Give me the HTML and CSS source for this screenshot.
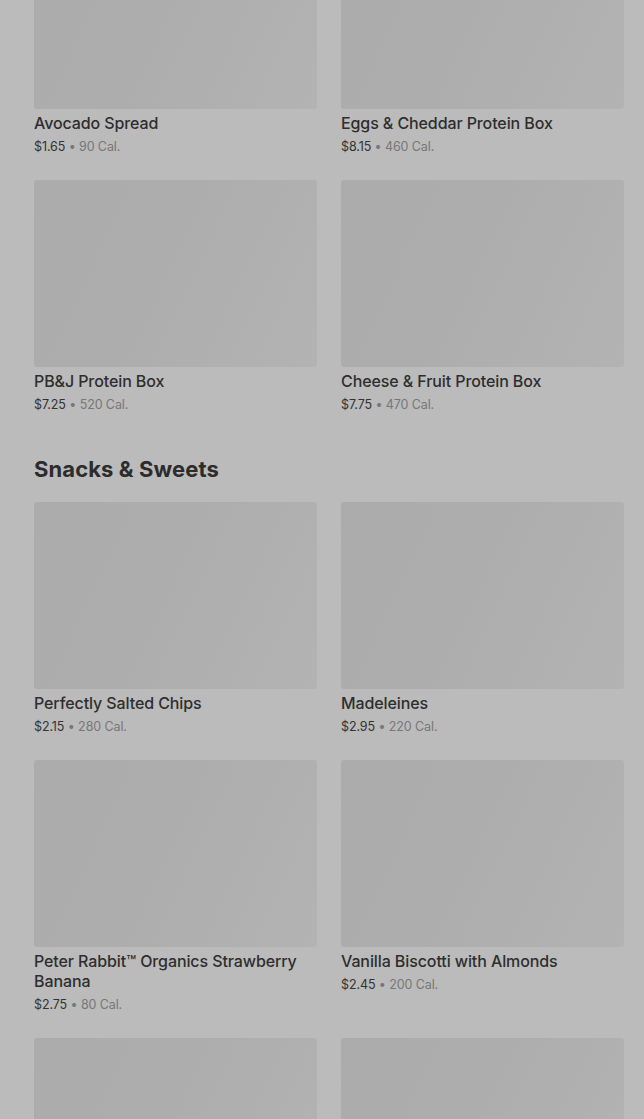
FILE: index.html
```html
<!DOCTYPE html>
<html lang="en">
<head>
  <meta charset="UTF-8" />
  <title>Menu</title>
  <link rel="stylesheet" href="styles.css">
</head>
<body>
  <main class="menu">
    <section class="section first">
      <div class="grid">
        <div class="item">
          <div class="thumb"></div>
          <div class="name">Avocado Spread</div>
          <div class="meta">$1.65 <span class="cal">&bull; 90 Cal.</span></div>
        </div>
        <div class="item">
          <div class="thumb"></div>
          <div class="name">Eggs &amp; Cheddar Protein Box</div>
          <div class="meta">$8.15 <span class="cal">&bull; 460 Cal.</span></div>
        </div>
        <div class="item">
          <div class="thumb"></div>
          <div class="name">PB&amp;J Protein Box</div>
          <div class="meta">$7.25 <span class="cal">&bull; 520 Cal.</span></div>
        </div>
        <div class="item">
          <div class="thumb"></div>
          <div class="name">Cheese &amp; Fruit Protein Box</div>
          <div class="meta">$7.75 <span class="cal">&bull; 470 Cal.</span></div>
        </div>
      </div>
    </section>

    <section class="section">
      <h2>Snacks &amp; Sweets</h2>
      <div class="grid">
        <div class="item">
          <div class="thumb"></div>
          <div class="name">Perfectly Salted Chips</div>
          <div class="meta">$2.15 <span class="cal">&bull; 280 Cal.</span></div>
        </div>
        <div class="item">
          <div class="thumb"></div>
          <div class="name">Madeleines</div>
          <div class="meta">$2.95 <span class="cal">&bull; 220 Cal.</span></div>
        </div>
        <div class="item">
          <div class="thumb"></div>
          <div class="name">Peter Rabbit™ Organics Strawberry Banana</div>
          <div class="meta">$2.75 <span class="cal">&bull; 80 Cal.</span></div>
        </div>
        <div class="item">
          <div class="thumb"></div>
          <div class="name">Vanilla Biscotti with Almonds</div>
          <div class="meta">$2.45 <span class="cal">&bull; 200 Cal.</span></div>
        </div>
        <div class="item">
          <div class="thumb"></div>
        </div>
        <div class="item">
          <div class="thumb"></div>
        </div>
      </div>
    </section>
  </main>
</body>
</html>
```

FILE: styles.css
```css
body {
  margin: 0;
  padding: 0;
  background: #bbbbbb;
  font-family: Inter, "Noto Sans", Arial, sans-serif;
  color: #2f2f2f;
  overflow: hidden;
}
.menu {
  padding: 0 20px 0 34px;
  margin-top: -78px;
}
.section h2 {
  margin: 41px 0 19px;
  font-size: 22px;
  line-height: 28px;
  font-weight: 700;
  letter-spacing: 0.1px;
  color: #2c2c2c;
}
.grid {
  display: grid;
  grid-template-columns: 1fr 1fr;
  column-gap: 24px;
  row-gap: 24px;
}
.item {
  display: flex;
  flex-direction: column;
}
.thumb {
  height: 187px;
  border-radius: 3px;
  background: linear-gradient(115deg, #acacac 0%, #adadad 45%, #b3b3b3 100%);
}
.name {
  margin-top: 4px;
  font-size: 16px;
  line-height: 20px;
  font-weight: 500;
  letter-spacing: -0.1px;
  color: #2e2e2e;
}
.meta {
  margin-top: 5px;
  font-size: 12.5px;
  line-height: 18px;
  letter-spacing: -0.1px;
  color: #333333;
}
.cal {
  color: #777777;
}
```
